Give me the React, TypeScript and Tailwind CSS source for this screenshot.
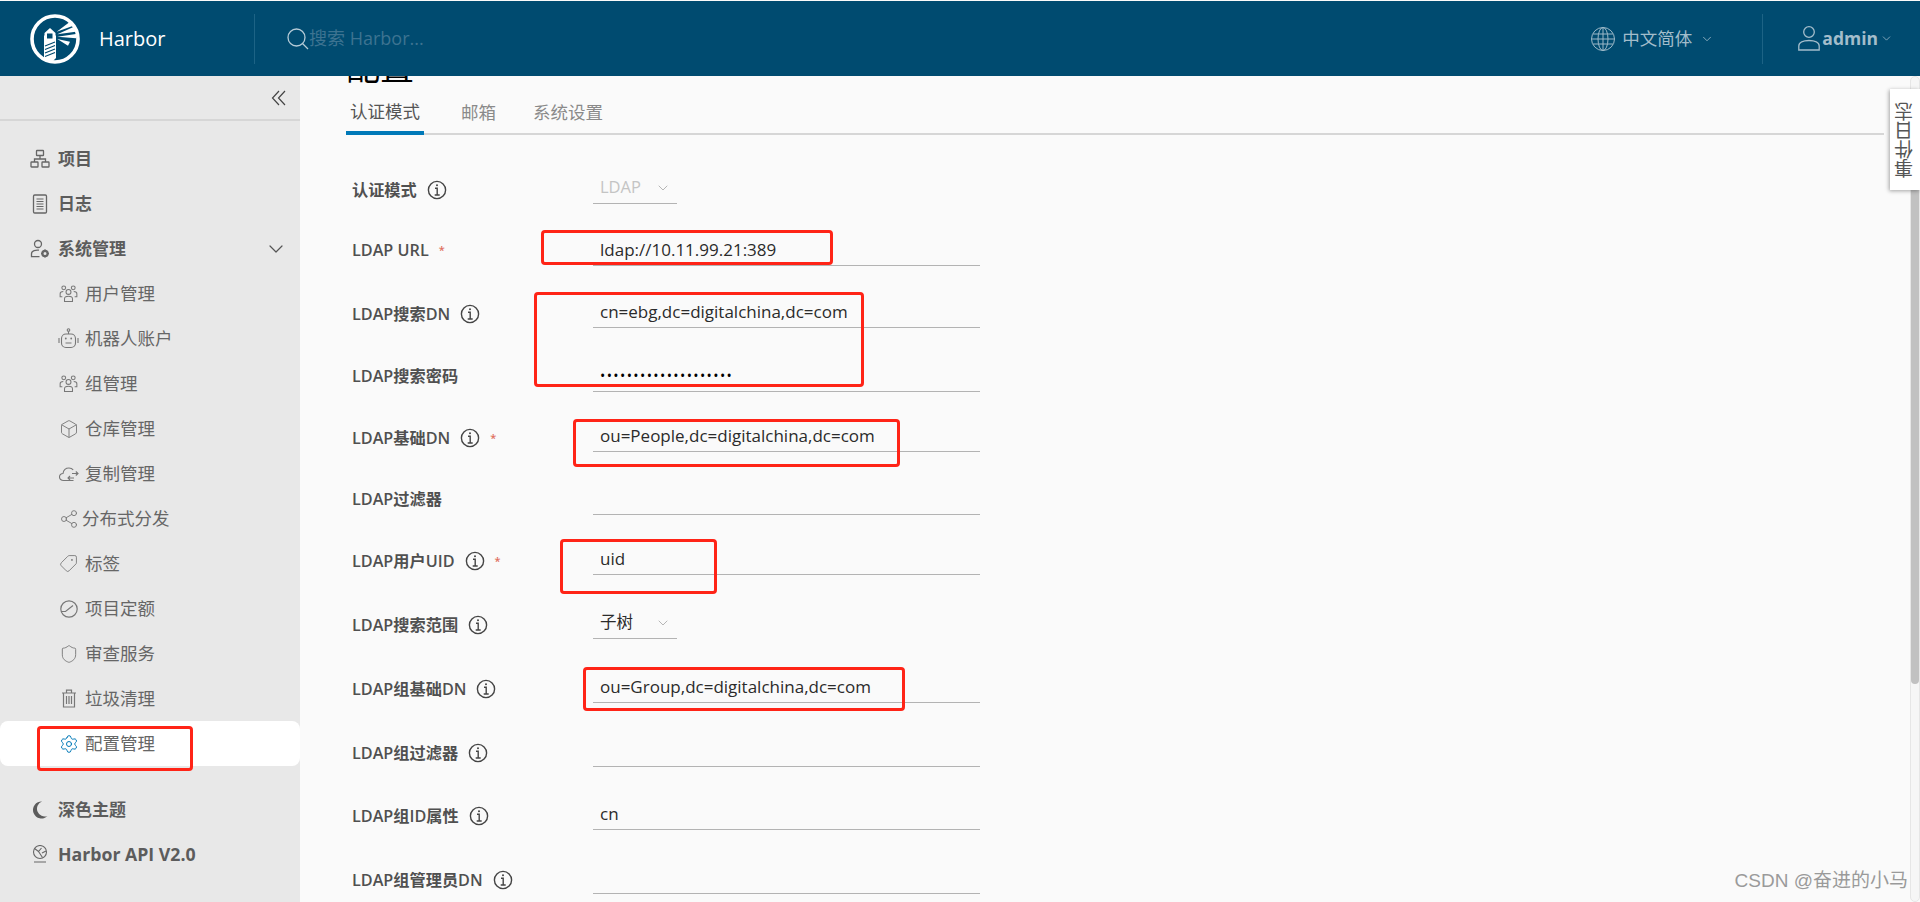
import React from "react";
import { Box, ChevronDown, Settings, Shield, Tag, Share2 } from "lucide-react";

const SANS = "font-['Open_Sans','Noto_Sans_CJK_SC',sans-serif]";

// Clarity style icons that lucide has no close match for
function OrgIcon() {
  return (
    <svg viewBox="0 0 20 20" className="h-[20px] w-[20px]" fill="none" stroke="#666" strokeWidth="1.3">
      <rect x="6.5" y="1.5" width="7" height="5" rx="0.6" />
      <rect x="1" y="13" width="7" height="5" rx="0.6" />
      <rect x="12" y="13" width="7" height="5" rx="0.6" />
      <path d="M10 6.5V10M4.500 13v-3h11v3" />
    </svg>
  );
}

function LogIcon() {
  return (
    <svg viewBox="0 0 20 20" className="h-[20px] w-[20px]" fill="none" stroke="#666" strokeWidth="1.3">
      <rect x="3.5" y="1" width="13" height="18" rx="1.2" />
      <path d="M6.5 5h7M6.5 7.5h7M6.5 10h7M6.5 12.5h7M6.5 15h7" strokeWidth="1" />
    </svg>
  );
}

function AdminIcon() {
  return (
    <svg viewBox="0 0 20 20" className="h-[20px] w-[20px]" fill="none" stroke="#666" strokeWidth="1.3">
      <circle cx="8" cy="5" r="3.5" />
      <path d="M9 11.2c-3-.5-7.5.3-7.5 3.5v3h8" />
      <circle cx="15" cy="14.5" r="2.6" strokeWidth="2.2" />
      <path d="M15 10.4v1.4M15 17.2v1.4M11 14.5h1.4M17.6 14.5H19" strokeWidth="1.6" />
    </svg>
  );
}

function GroupIcon() {
  return (
    <svg viewBox="0 0 20 20" className="h-[19px] w-[19px]" fill="none" stroke="#777" strokeWidth="1.1">
      <circle cx="10" cy="8.3" r="2.6" />
      <circle cx="5" cy="4" r="2" />
      <circle cx="15" cy="4" r="2" />
      <path d="M5.800 18.500v-3c0-1.800 1.600-2.600 4.200-2.600s4.200.8 4.200 2.600v3z" />
      <path d="M3.500 13.500H1.200v-3.300c0-1.500 1.300-2.400 3.300-2.400M16.500 13.500h2.300v-3.300c0-1.500-1.300-2.400-3.300-2.400" />
    </svg>
  );
}

function RobotIcon() {
  return (
    <svg viewBox="0 0 21 21" className="h-[21px] w-[21px]" fill="none" stroke="#777" strokeWidth="1.1">
      <circle cx="10.500" cy="2" r="1.300" />
      <path d="M10.500 3.300V6" />
      <rect x="3.500" y="6" width="14" height="13.500" rx="4.500" />
      <circle cx="7.800" cy="10.500" r="0.900" fill="#777" stroke="none" />
      <circle cx="13.200" cy="10.500" r="0.900" fill="#777" stroke="none" />
      <path d="M7.500 15h6M1 10v5M20 10v5" />
    </svg>
  );
}

function CloudIcon() {
  return (
    <svg viewBox="0 0 20 20" className="h-[20px] w-[20px]" fill="none" stroke="#777" strokeWidth="1.1">
      <path d="M14.500 16.500H4.500C2.200 16.500.5 15 .5 13c0-2 1.500-3.300 3.500-3.500C4.500 6.300 7 4 10 4c1.800 0 3.200.7 4.200 1.900" />
      <path d="M13 9.500h6M16.800 7.500l2.200 2-2.200 2M15 14h-6M11 12l-2 2 2 2" />
    </svg>
  );
}

function GaugeIcon() {
  return (
    <svg viewBox="0 0 18 18" className="h-[18px] w-[18px]" fill="none" stroke="#777" strokeWidth="1.2">
      <circle cx="9" cy="9" r="8.200" />
      <path d="M1 11.500h4.500L13 5.500" />
    </svg>
  );
}

function TrashIcon() {
  return (
    <svg viewBox="0 0 16 19" className="h-[19px] w-[16px]" fill="none" stroke="#777" strokeWidth="1.2">
      <path d="M1 4h14M5.500 4V1.200h5V4M2.500 4v14h11V4M5.500 7v8M8 7v8M10.500 7v8" />
    </svg>
  );
}

function LighthouseLogo() {
  return (
    <svg viewBox="0 0 50 50" className="h-[50px] w-[50px] shrink-0">
      <circle cx="25" cy="25" r="23" fill="none" stroke="#fff" strokeWidth="3.6" />
      <path d="M14.500 19l5.500-5 5.500 5v2.500h.5V44l-2 2h-9l-1-2V21.500h.500z" fill="#fff" />
      <rect x="17" y="19.500" width="5.500" height="5" fill="#004b70" />
      <path d="M15 32l10-4M15 35.500l10-4M15 39l10-4M15 42.500l10-4" stroke="#004b70" strokeWidth="1.2" />
      <path d="M26.700 17.700L40 7.700l3.300 4zM27.300 20.300L44 12.700l1.700 5zM27.300 22.700L46 20v4.300zM27.300 25L40 27.700l-2 4z" fill="#fff" />
    </svg>
  );
}

function InfoIcon() {
  return (
    <svg viewBox="0 0 20 20" className="h-[20px] w-[20px] shrink-0" fill="none" stroke="#444" strokeWidth="1.4">
      <circle cx="10" cy="10" r="8.600" />
      <path d="M8 8.300h2.200V15M7.700 15h5" />
      <circle cx="10" cy="5.300" r="1" fill="#444" stroke="none" />
    </svg>
  );
}

const subItems: { label: string; icon: React.ReactNode; tight?: boolean }[] = [
  { label: "用户管理", icon: <GroupIcon /> },
  { label: "机器人账户", icon: <RobotIcon /> },
  { label: "组管理", icon: <GroupIcon /> },
  { label: "仓库管理", icon: <Box size={20} strokeWidth={1.1} color="#777" /> },
  { label: "复制管理", icon: <CloudIcon /> },
  { label: "分布式分发", icon: <Share2 size={20} strokeWidth={1.1} color="#777" />, tight: true },
  { label: "标签", icon: <Tag size={19} strokeWidth={1.1} color="#777" className="scale-x-[-1]" /> },
  { label: "项目定额", icon: <GaugeIcon /> },
  { label: "审查服务", icon: <Shield size={20} strokeWidth={1.1} color="#777" /> },
  { label: "垃圾清理", icon: <TrashIcon /> },
];

function Sidebar() {
  return (
    <aside className="relative flex h-full w-[300px] shrink-0 flex-col bg-[#e8e8e8]">
      <div className="flex h-[45px] shrink-0 items-center justify-end border-b-2 border-[#d6d6d6] pr-[14px]">
        <svg viewBox="0 0 15 16" className="h-[16px] w-[15px]" fill="none" stroke="#444" strokeWidth="1.2">
          <path d="M8 1L1.500 8 8 15M14 1L7.500 8 14 15" />
        </svg>
      </div>
      <nav className="flex flex-col pt-[15px]">
        <div className="flex h-[45px] items-center gap-[8px] pl-[30px] text-[17px] font-bold text-[#5c5c5c]">
          <OrgIcon /> 项目
        </div>
        <div className="flex h-[45px] items-center gap-[8px] pl-[30px] text-[17px] font-bold text-[#5c5c5c]">
          <LogIcon /> 日志
        </div>
        <div className="flex h-[45px] items-center gap-[8px] pl-[30px] pr-[12px] text-[17px] font-bold text-[#5c5c5c]">
          <AdminIcon /> 系统管理
          <ChevronDown size={24} strokeWidth={1.2} color="#555" className="ml-auto" />
        </div>
        {subItems.map((item) => (
          <div
            key={item.label}
            className={`flex h-[45px] items-center pl-[58px] text-[17.500px] text-[#666] ${item.tight ? "gap-[3px]" : "gap-[6px]"}`}
          >
            <span className="flex w-[21px] justify-center">{item.icon}</span>
            {item.label}
          </div>
        ))}
        <div className="flex h-[45px] items-center gap-[6px] rounded-[8px] bg-white pl-[58px] text-[17.500px] text-[#666]">
          <span className="flex w-[21px] justify-center">
            <Settings size={20} strokeWidth={1.2} color="#0079b8" />
          </span>
          配置管理
        </div>
        <div className="mt-[21px] flex h-[45px] items-center gap-[10px] pl-[32px] text-[17px] font-bold text-[#5c5c5c]">
          <svg viewBox="0 0 16 18" className="h-[18px] w-[16px]" fill="#5c5c5c">
            <path d="M10 .5A8.500 8.500 0 1 0 15.500 15 7.500 7.500 0 0 1 10 .5z" />
          </svg>
          深色主题
        </div>
        <div className="flex h-[44px] items-center gap-[10px] pl-[32px] text-[17.700px] font-bold text-[#5c5c5c]">
          <svg viewBox="0 0 16 18" className="h-[18px] w-[16px]" fill="none" stroke="#666" strokeWidth="1.1">
            <circle cx="8" cy="7" r="6.500" />
            <path d="M2.500 3.500l4 3 3-3.500M6.500 6.500l4 6M10 8l4-2M2 17h12" />
          </svg>
          Harbor API V2.0
        </div>
      </nav>
    </aside>
  );
}

type Row = {
  label: string;
  height: string;
  value?: string;
  info?: boolean;
  required?: boolean;
  password?: boolean;
};

const rows: Row[] = [
  { label: "LDAP URL", height: "h-[62px]", value: "ldap://10.11.99.21:389", required: true },
  { label: "LDAP搜索DN", height: "h-[62px]", value: "cn=ebg,dc=digitalchina,dc=com", info: true },
  { label: "LDAP搜索密码", height: "h-[64px]", value: "••••••••••••••••••••", password: true },
  { label: "LDAP基础DN", height: "h-[60px]", value: "ou=People,dc=digitalchina,dc=com", info: true, required: true },
  { label: "LDAP过滤器", height: "h-[63px]" },
  { label: "LDAP用户UID", height: "h-[60px]", value: "uid", info: true, required: true },
];

const rowsAfterScope: Row[] = [
  { label: "LDAP组基础DN", height: "h-[64px]", value: "ou=Group,dc=digitalchina,dc=com", info: true },
  { label: "LDAP组过滤器", height: "h-[64px]", info: true },
  { label: "LDAP组ID属性", height: "h-[63px]", value: "cn", info: true },
  { label: "LDAP组管理员DN", height: "h-[64px]", info: true },
];

function FormLabel({ row }: { row: Row }) {
  return (
    <div className={`flex w-[241px] shrink-0 items-center text-[16.200px] font-semibold text-[#505050] ${row.info ? "pb-[2px]" : "pb-[4px]"}`}>
      <span>{row.label}</span>
      {row.info ? <span className="ml-[10px]"><InfoIcon /></span> : null}
      {row.required ? <span className="ml-[10px] text-[11px] leading-none text-[#e0705f]">*</span> : null}
    </div>
  );
}

function FormRow({ row }: { row: Row }) {
  return (
    <div className={`flex items-end ${row.height}`}>
      <FormLabel row={row} />
      <div className="flex h-[30px] w-[387px] items-center border-b border-[#b3b3b3] pb-[2px] pl-[7px] text-[17px] text-[#2b2b2b]">
        {row.password ? <span className="text-[14px] tracking-[1.400px] text-black">{row.value}</span> : row.value}
      </div>
    </div>
  );
}

function SelectRow({ label, value, height, muted }: { label: string; value: string; height: string; muted?: boolean }) {
  return (
    <div className={`flex items-end ${height}`}>
      <FormLabel row={{ label, height, info: true }} />
      <div className={`flex h-[30px] w-[84px] items-center justify-between border-b border-[#b3b3b3] pb-[2px] pl-[7px] pr-[6px] text-[16.500px] ${muted ? "text-[#c4c4c4]" : "text-[#2b2b2b]"}`}>
        {value}
        <ChevronDown size={16} strokeWidth={1.3} color="#aaa" />
      </div>
    </div>
  );
}

function RedBox({ className }: { className: string }) {
  return <div className={`pointer-events-none absolute rounded-[4px] border-[3.500px] border-[#ff2417] ${className}`} />;
}

export default function App() {
  return (
    <div className={`relative flex h-[902px] w-[1920px] flex-col overflow-hidden bg-[#fafafa] pt-px ${SANS}`}>
      <header className="flex h-[75px] shrink-0 items-center bg-[#004b70]">
        <div className="flex h-[50px] w-[255px] items-center border-r border-[#1d6385] pl-[30px]">
          <LighthouseLogo />
          <span className="ml-[19px] text-[20px] text-white">Harbor</span>
        </div>
        <svg viewBox="0 0 22 22" className="ml-[32px] h-[22px] w-[22px]" fill="none" stroke="#b5cbd7" strokeWidth="1.3">
          <circle cx="9.500" cy="9.500" r="8.500" />
          <path d="M15.500 15.500L21 21" />
        </svg>
        <span className="text-[18px] text-[#3d7391]">搜索 Harbor...</span>
        <div className="ml-auto flex h-[50px] items-center">
          <svg viewBox="0 0 24 24" className="h-[24px] w-[24px]" fill="none" stroke="#9db9c8" strokeWidth="1">
            <circle cx="12" cy="12" r="11.500" />
            <ellipse cx="12" cy="12" rx="5" ry="11.500" />
            <path d="M12 .5v23M2 7h20M2 17h20M.5 12h23" />
          </svg>
          <span className="ml-[7px] text-[17.500px] text-[#a3bdcb]">中文简体</span>
          <ChevronDown size={14} strokeWidth={1.4} color="#a3bdcb" className="ml-[8px]" />
          <div className="ml-[48px] h-[50px] border-r border-[#1d6385]" />
          <svg viewBox="0 0 22 25" className="ml-[35px] h-[25px] w-[22px]" fill="none" stroke="#a3bdcb" strokeWidth="1.3">
            <circle cx="11" cy="6" r="5.300" />
            <path d="M.8 24v-4c0-3.500 4.500-5.500 10.200-5.500s10.200 2 10.200 5.500v4z" />
          </svg>
          <span className="ml-[2px] text-[17.500px] font-bold text-[#a3bdcb]">admin</span>
          <ChevronDown size={13} strokeWidth={1.4} color="#a3bdcb" className="ml-[2px] mr-[27px]" />
        </div>
      </header>

      <div className="flex min-h-0 flex-1">
        <Sidebar />
        <main className="min-w-0 flex-1 overflow-hidden pl-[46px]">
          <h1 className="mt-[-26px] h-[34px] text-[34px] leading-[34px] font-normal text-black">配置</h1>
          <div className="mt-[8px] flex h-[43px] w-[1538px] items-stretch gap-[37px] border-b-2 border-[#d6d6d6] text-[17.500px] text-[#8a8a8a]">
            <div className="mb-[-2px] flex w-[78px] items-center justify-center border-b-[4px] border-[#0079b8] text-[#555]">认证模式</div>
            <div className="flex items-center">邮箱</div>
            <div className="flex items-center">系统设置</div>
          </div>
          <div className="pl-[6px]">
            <SelectRow label="认证模式" value="LDAP" height="h-[69px]" muted />
            {rows.map((row) => (
              <FormRow key={row.label} row={row} />
            ))}
            <SelectRow label="LDAP搜索范围" value="子树" height="h-[64px]" />
            {rowsAfterScope.map((row) => (
              <FormRow key={row.label} row={row} />
            ))}
          </div>
        </main>
        <div className="relative w-[10px] shrink-0 rounded-full border border-[#e6e6e6] bg-[#f6f6f6]">
          <div className="mt-[70px] h-[537px] rounded-b-full bg-[#c1c1c1]" />
        </div>
      </div>

      <div className="absolute right-0 top-[89px] flex h-[101px] w-[30px] items-center justify-center bg-white shadow-[-1px_1px_4px_rgba(0,0,0,0.35)]">
        <span className="rotate-180 text-[19px] leading-none text-[#555] [writing-mode:vertical-rl]">事件日志</span>
      </div>

      <RedBox className="left-[541px] top-[230px] h-[35px] w-[292px]" />
      <RedBox className="left-[534px] top-[292px] h-[95px] w-[330px]" />
      <RedBox className="left-[573px] top-[419px] h-[48px] w-[327px]" />
      <RedBox className="left-[560px] top-[539px] h-[55px] w-[157px]" />
      <RedBox className="left-[583px] top-[667px] h-[44px] w-[322px]" />
      <RedBox className="left-[37px] top-[726px] h-[45px] w-[156px]" />

      <div className="absolute bottom-[7px] right-[12px] text-[19px] text-[#9a9a9a] font-['Liberation_Sans','Noto_Sans_CJK_SC',sans-serif]">CSDN @奋进的小马</div>
    </div>
  );
}
